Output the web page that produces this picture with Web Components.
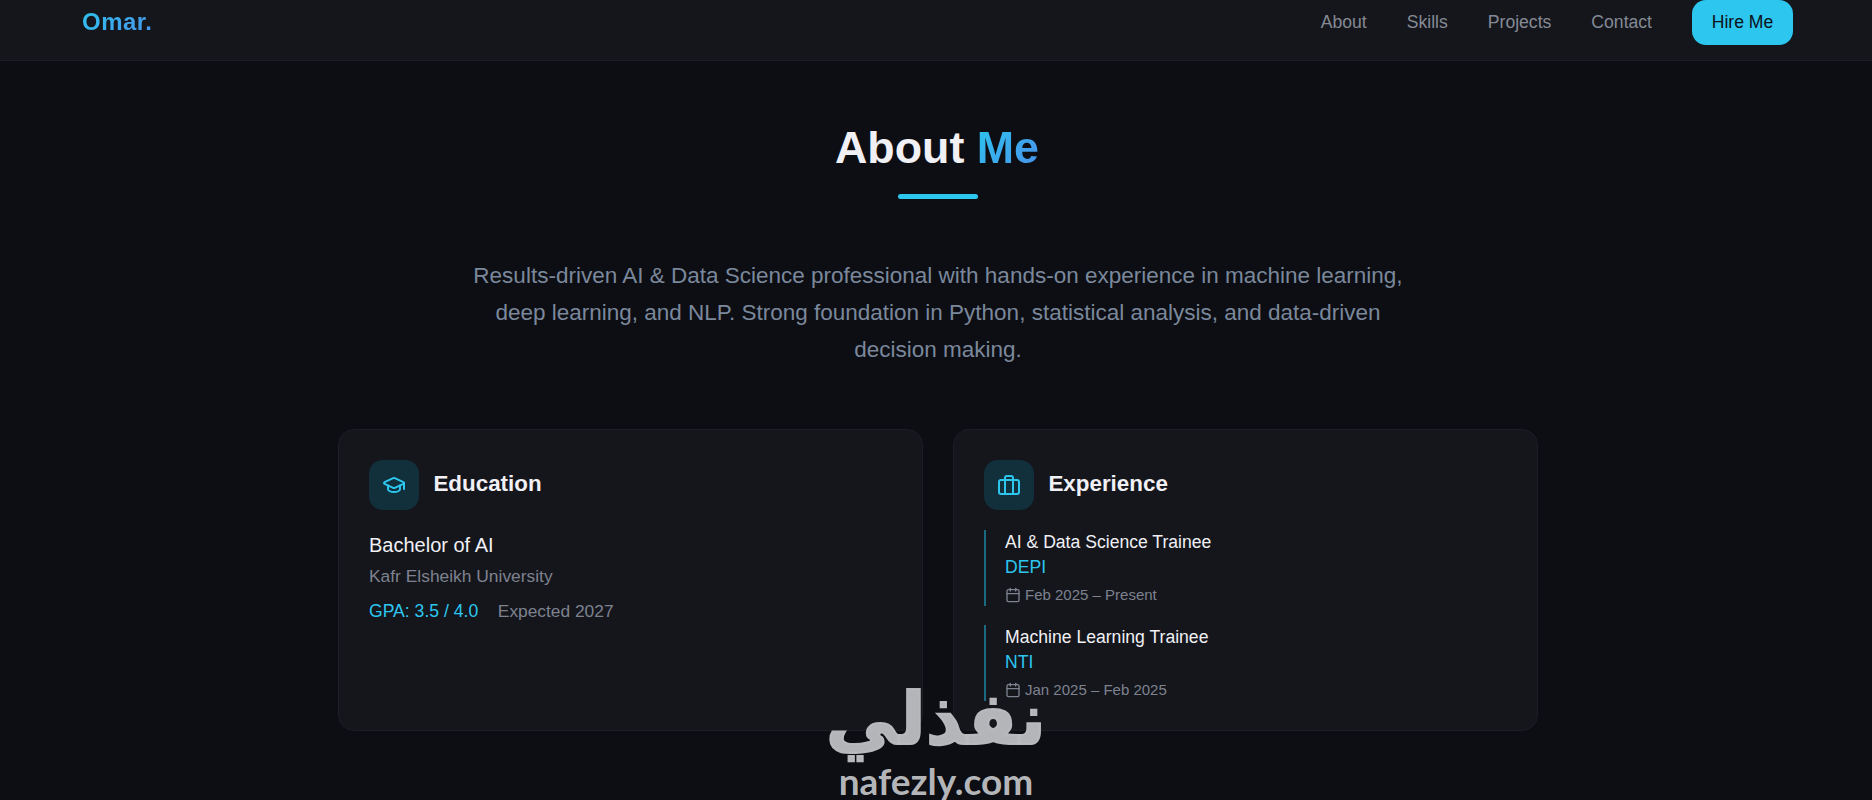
<!DOCTYPE html>
<html lang="en">
<head>
<meta charset="utf-8">
<title>Omar</title>
<style>
html,body{margin:0;padding:0;height:800px;overflow:hidden;background:#0c0e13;}
body{font-family:"Liberation Sans",Arial,sans-serif;color:#f0f0f5;position:relative;}
</style>
</head>
<body>
<template id="t-nav">
<style>
:host{display:flex;justify-content:space-between;align-items:flex-start;height:60px;box-sizing:content-box;padding:0 79px 0 82px;background:#14161c;border-bottom:1px solid #1c1e25;}
.logo{font-size:24px;font-weight:700;line-height:44px;letter-spacing:.5px;background:linear-gradient(135deg,#2cc6ef,#4a8fea);-webkit-background-clip:text;background-clip:text;color:transparent;}
.links{display:flex;align-items:flex-start;gap:40px;font-size:17.6px;line-height:44px;color:#858a95;}
.cta{display:block;width:101px;height:45px;box-sizing:border-box;text-align:center;border-radius:14px;background:#2cc6ef;color:#0c1118;}
</style>
<div class="logo">Omar.</div>
<div class="links"><span>About</span><span>Skills</span><span>Projects</span><span>Contact</span><span class="cta">Hire Me</span></div>
</template>

<template id="t-title">
<style>
:host{display:block;text-align:center;}
h2{margin:0;padding-right:2px;font-size:44.8px;line-height:56px;font-weight:700;color:#f0f0f5;}
.g{background:linear-gradient(135deg,#2cc6ef,#4a8fea);-webkit-background-clip:text;background-clip:text;color:transparent;}
.bar{width:80px;height:5px;border-radius:3px;background:#2cc6ef;margin:19px auto 0;}
</style>
<h2><slot></slot> <span class="g"><slot name="accent"></slot></span></h2>
<div class="bar"></div>
</template>

<template id="t-card">
<style>
:host{display:block;box-sizing:border-box;height:302px;padding:30px;background:#14161c;border:1px solid #1c1e25;border-radius:16px;}
.head{display:flex;align-items:center;gap:14.4px;margin-bottom:20px;}
.ic{width:50px;height:50px;border-radius:14px;background:#12303c;display:flex;align-items:center;justify-content:center;color:#2cc6ef;}
h3{margin:0 0 1px;font-size:22.4px;font-weight:700;color:#f0f0f5;}
</style>
<div class="head"><div class="ic"><slot name="icon"></slot></div><h3><slot name="title"></slot></h3></div>
<slot></slot>
</template>

<template id="t-edu">
<style>
:host{display:block;padding-top:2px;}
.d{font-size:20px;line-height:26px;color:#f0f0f5;margin-bottom:6.5px;}
.u{font-size:17.4px;line-height:24px;color:#7e828f;margin-bottom:10.5px;}
.r{display:flex;gap:19.6px;font-size:17.6px;line-height:24px;color:#7e828f;}
.g{color:#2cc6ef;}
.e{font-size:17.35px;}
</style>
<div class="d">Bachelor of AI</div>
<div class="u">Kafr Elsheikh University</div>
<div class="r"><span class="g">GPA: 3.5 / 4.0</span><span class="e">Expected 2027</span></div>
</template>

<template id="t-job">
<style>
:host{display:block;height:76px;border-left:2px solid #1b6a82;padding-left:19px;margin-bottom:19px;}
.t{font-size:17.6px;line-height:24px;color:#f0f0f5;}
.c{font-size:17.6px;line-height:26px;color:#2cc6ef;}
.m{display:flex;align-items:center;gap:4px;margin-top:2px;font-size:15px;line-height:26px;color:#7e828f;}
svg{width:16px;height:16px;fill:none;stroke:currentColor;stroke-width:2;stroke-linecap:round;stroke-linejoin:round;}
</style>
<div class="t"><slot name="t"></slot></div>
<div class="c"><slot name="c"></slot></div>
<div class="m"><svg viewBox="0 0 24 24"><path d="M8 2v4"/><path d="M16 2v4"/><rect x="3" y="4" width="18" height="18" rx="2"/><path d="M3 10h18"/></svg><slot name="m"></slot></div>
</template>

<template id="t-about">
<style>
:host{display:block;width:1200px;margin-left:338px;padding-top:58px;}
p{width:950px;margin:59px auto 0;text-align:center;font-size:22.5px;line-height:36.8px;color:#7b889c;}
.grid{display:grid;grid-template-columns:1fr 1fr;gap:30px;margin-top:60.6px;}
</style>
<slot name="title"></slot>
<p><slot name="lead"></slot></p>
<div class="grid"><slot></slot></div>
</template>

<template id="t-mark">
<style>
:host{position:absolute;left:820px;top:675px;width:232px;height:122px;text-align:center;color:rgba(186,187,190,.97);pointer-events:none;}
.a{font-family:"DejaVu Sans",sans-serif;font-weight:700;font-size:72px;line-height:88px;-webkit-text-stroke:2px currentColor;}
.b{font-family:"Lato",sans-serif;font-weight:700;font-size:37px;line-height:30px;margin-top:3px;}
</style>
<div class="a" dir="rtl" lang="ar">نفذلي</div>
<div class="b">nafezly.com</div>
</template>

<top-nav></top-nav>
<about-section>
  <section-title slot="title">About<span slot="accent">Me</span></section-title>
  <span slot="lead">Results-driven AI &amp; Data Science professional with hands-on experience in machine learning, deep learning, and NLP. Strong foundation in Python, statistical analysis, and data-driven decision making.</span>
  <info-card>
    <svg slot="icon" width="24" height="24" viewBox="0 0 24 24" fill="none" stroke="currentColor" stroke-width="2" stroke-linecap="round" stroke-linejoin="round"><path d="M21.42 10.922a1 1 0 0 0-.019-1.838L12.83 5.18a2 2 0 0 0-1.66 0L2.6 9.08a1 1 0 0 0 0 1.832l8.57 3.908a2 2 0 0 0 1.66 0z"/><path d="M22 10v6"/><path d="M6 12.5V16a6 3 0 0 0 12 0v-3.5"/></svg>
    <span slot="title">Education</span>
    <edu-block></edu-block>
  </info-card>
  <info-card>
    <svg slot="icon" width="24" height="24" viewBox="0 0 24 24" fill="none" stroke="currentColor" stroke-width="2" stroke-linecap="round" stroke-linejoin="round"><rect x="2" y="7" width="20" height="14" rx="2"/><path d="M16 21V5a2 2 0 0 0-2-2h-4a2 2 0 0 0-2 2v16"/></svg>
    <span slot="title">Experience</span>
    <job-item><span slot="t">AI &amp; Data Science Trainee</span><span slot="c">DEPI</span><span slot="m">Feb 2025 – Present</span></job-item>
    <job-item><span slot="t">Machine Learning Trainee</span><span slot="c">NTI</span><span slot="m">Jan 2025 – Feb 2025</span></job-item>
  </info-card>
</about-section>
<water-mark></water-mark>
<script>
[['top-nav','t-nav'],['section-title','t-title'],['info-card','t-card'],['edu-block','t-edu'],['job-item','t-job'],['about-section','t-about'],['water-mark','t-mark']].forEach(([n,t])=>{
  customElements.define(n,class extends HTMLElement{constructor(){super();this.attachShadow({mode:'open'}).appendChild(document.getElementById(t).content.cloneNode(true));}});
});
</script>
</body>
</html>
